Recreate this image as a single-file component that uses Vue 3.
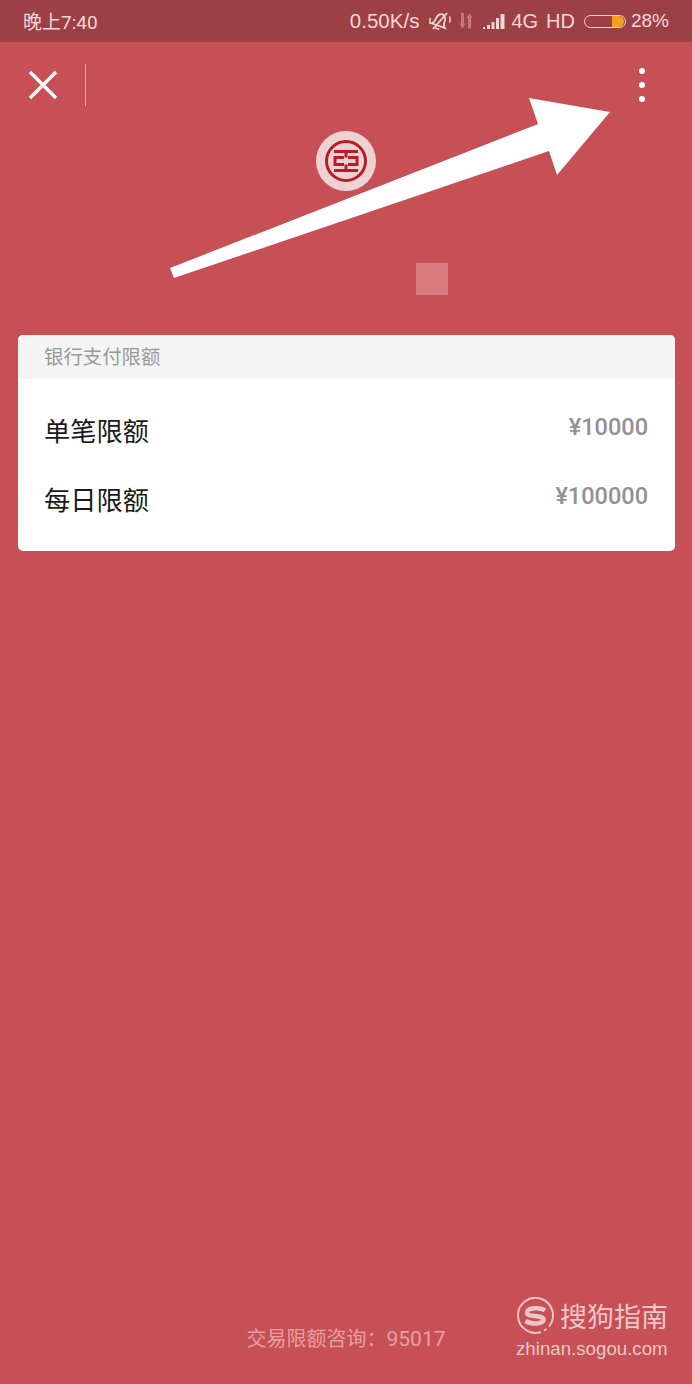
<template>
  <div class="page">
    <div class="status">
      <span class="time">晚上7:40</span>
      <div class="status-right">
        <span class="speed">0.50K/s</span>
        <svg class="bell" width="22" height="20" viewBox="0 0 22 20" fill="none" stroke="#f4d6d6" stroke-width="1.800">
          <g transform="rotate(20 11 10)">
            <path d="M4 15c2-1.500 2.500-3.500 2.500-6.500 0-3 2.200-5.500 4.500-5.500s4.500 2.500 4.500 5.500c0 3 .5 5 2.500 6.500z" />
            <path d="M9 17.500c1 1 3 1 4 0" />
          </g>
          <path d="M1.500 7c-.8 2-.8 4 0 6M20.500 5.500c.8 2 .8 4 0 6" stroke-width="1.500" />
          <path d="M4 18L18 2" />
        </svg>
        <svg class="updown" width="16" height="16" viewBox="0 0 16 16" fill="#c27a7d">
          <path d="M3 0h3v10.500h1.500L4.500 15.500 1.500 10.500H3zM10 15.500h3V5h1.500L11.500 0 8.500 5H10z" />
        </svg>
        <svg class="signal" width="22" height="15" viewBox="0 0 22 15" fill="#f4d6d6">
          <rect x="0" y="13" width="2" height="2" />
          <rect x="4" y="11" width="3" height="4" />
          <rect x="8.500" y="8" width="3" height="7" />
          <rect x="13" y="4" width="3" height="11" />
          <rect x="17.500" y="0" width="4" height="15" />
        </svg>
        <span>4G</span>
        <span class="hd">HD</span>
        <div class="battery"><i></i></div>
        <span class="percent">28%</span>
      </div>
    </div>

    <div class="toolbar">
      <svg width="32" height="32" viewBox="0 0 32 32" stroke="#fff" stroke-width="3.300" fill="none">
        <path d="M3 3l26 26M29 3L3 29" />
      </svg>
      <div class="divider"></div>
      <div class="more"><i></i><i></i><i></i></div>
    </div>

    <div class="bank">
      <div class="logo">
        <svg width="44" height="44" viewBox="0 0 44 44" fill="none" stroke="#b81c24">
          <circle cx="22" cy="22" r="19.500" stroke-width="3" />
          <path d="M10 12.500H34M22 12.500V18.500M20 18.500H11V25.500H20M24 18.500H33V25.500H24M22 25.500V31.500M10 31.500H34" stroke-width="3" />
        </svg>
      </div>
      <div class="square"></div>
    </div>

    <div class="card">
      <div class="card-head">银行支付限额</div>
      <div class="card-body">
        <div v-for="row in rows" :key="row.label" class="row">
          <span class="label">{{ row.label }}</span>
          <span class="amount">{{ row.amount }}</span>
        </div>
      </div>
    </div>

    <div class="spacer"></div>
    <div class="hotline">交易限额咨询：<span class="phone">95017</span></div>

    <svg class="arrow" width="692" height="300" viewBox="0 0 692 300">
      <polygon points="170,268 538,124 529,98 610,112 557,175 549,151 174,278" fill="#fff" />
    </svg>

    <div class="mark">
      <div class="mark-top">
        <svg width="38" height="38" viewBox="0 0 38 38" fill="none" stroke="#ecc6c6">
          <path d="M25 35A17.500 17.500 0 1 1 33 29.500" stroke-width="2" />
          <path d="M30.500 32l-2.500 1.800" stroke-width="2" />
          <path d="M29 13.500C25 10.500 11.500 10 11 15.500 10.500 20.500 27 17.500 27.500 22.500 28 27.500 15 27.500 9.500 24" stroke-width="4.500" />
        </svg>
        <span class="mark-name">搜狗指南</span>
      </div>
      <div class="mark-url">zhinan.sogou.com</div>
    </div>
  </div>
</template>

<script setup>
const rows = [
  { label: '单笔限额', amount: '¥10000' },
  { label: '每日限额', amount: '¥100000' },
]
</script>

<style>
html, body { margin: 0; padding: 0; }
</style>

<style scoped>
.page {
  position: relative;
  width: 692px;
  height: 1384px;
  overflow: hidden;
  display: flex;
  flex-direction: column;
  background: #c65055;
  font-family: Roboto, "Noto Sans CJK SC", sans-serif;
}

.status {
  height: 42px;
  flex: none;
  display: flex;
  align-items: center;
  justify-content: space-between;
  padding: 0 23px;
  background: #9c4045;
  color: #f4d6d6;
}

.time {
  font-size: 19px;
  margin-top: -2px;
}

.status-right {
  display: flex;
  align-items: center;
  font-family: "Liberation Sans", sans-serif;
  font-size: 20px;
}

.speed { font-size: 20.500px; }
.bell { margin-left: 10px; }
.updown { margin-left: 7px; }
.signal { margin-left: 9px; margin-right: 6px; }
.hd { margin-left: 8px; }
.percent { font-size: 19px; }

.battery {
  width: 40px;
  height: 11px;
  margin: 0 5px 0 9px;
  border: 1.500px solid #f4d6d6;
  border-radius: 8px;
  position: relative;
}

.battery i {
  position: absolute;
  right: 1px;
  top: 0;
  width: 12px;
  height: 11px;
  border-radius: 0 6px 6px 0;
  background: #f5a01c;
}

.toolbar {
  height: 86px;
  flex: none;
  display: flex;
  align-items: center;
  padding: 0 47px 0 27px;
}

.divider {
  width: 1px;
  height: 42px;
  margin-left: 26px;
  background: #e9b3b5;
}

.more {
  margin-left: auto;
  display: flex;
  flex-direction: column;
  gap: 8px;
}

.more i {
  display: block;
  width: 6px;
  height: 6px;
  border-radius: 50%;
  background: #fff;
}

.bank {
  height: 207px;
  flex: none;
  display: flex;
  flex-direction: column;
  align-items: center;
  padding-top: 3px;
  box-sizing: border-box;
}

.logo {
  width: 60px;
  height: 60px;
  border-radius: 50%;
  background: #ecd2d3;
  display: flex;
  align-items: center;
  justify-content: center;
}

.square {
  width: 32px;
  height: 32px;
  margin-top: 72px;
  margin-left: 172px;
  background: #d67a7e;
}

.card {
  flex: none;
  margin: 0 17px 0 18px;
  height: 216px;
  border-radius: 5px;
  overflow: hidden;
  background: #fff;
}

.card-head {
  height: 44px;
  line-height: 46px;
  padding-left: 26px;
  background: #f4f4f4;
  color: #9a9a9a;
  font-size: 19.400px;
}

.card-body {
  padding-top: 18px;
}

.row {
  height: 69px;
  display: flex;
  justify-content: space-between;
  padding: 0 27px 0 26px;
}

.label {
  font-size: 26.250px;
  line-height: 70px;
  color: #1a1a1a;
}

.amount {
  font-family: Roboto, sans-serif;
  font-size: 23.500px;
  font-weight: 500;
  line-height: 60px;
  color: #929292;
}

.spacer {
  flex: 1;
}

.hotline {
  flex: none;
  height: 60px;
  text-align: center;
  color: #e6a0a2;
  font-size: 20px;
  line-height: 30px;
}

.phone {
  font-size: 21px;
}

.arrow {
  position: absolute;
  left: 0;
  top: 0;
}

.mark {
  position: absolute;
  left: 516px;
  top: 1297px;
  color: #ecc6c6;
}

.mark-top {
  display: flex;
  align-items: center;
}

.mark-name {
  margin-left: 6px;
  font-size: 27px;
  line-height: 38px;
  font-family: "Noto Sans CJK SC", sans-serif;
}

.mark-url {
  font-family: "Liberation Sans", sans-serif;
  font-size: 18.700px;
  line-height: 24px;
  margin-top: 2px;
}
</style>
